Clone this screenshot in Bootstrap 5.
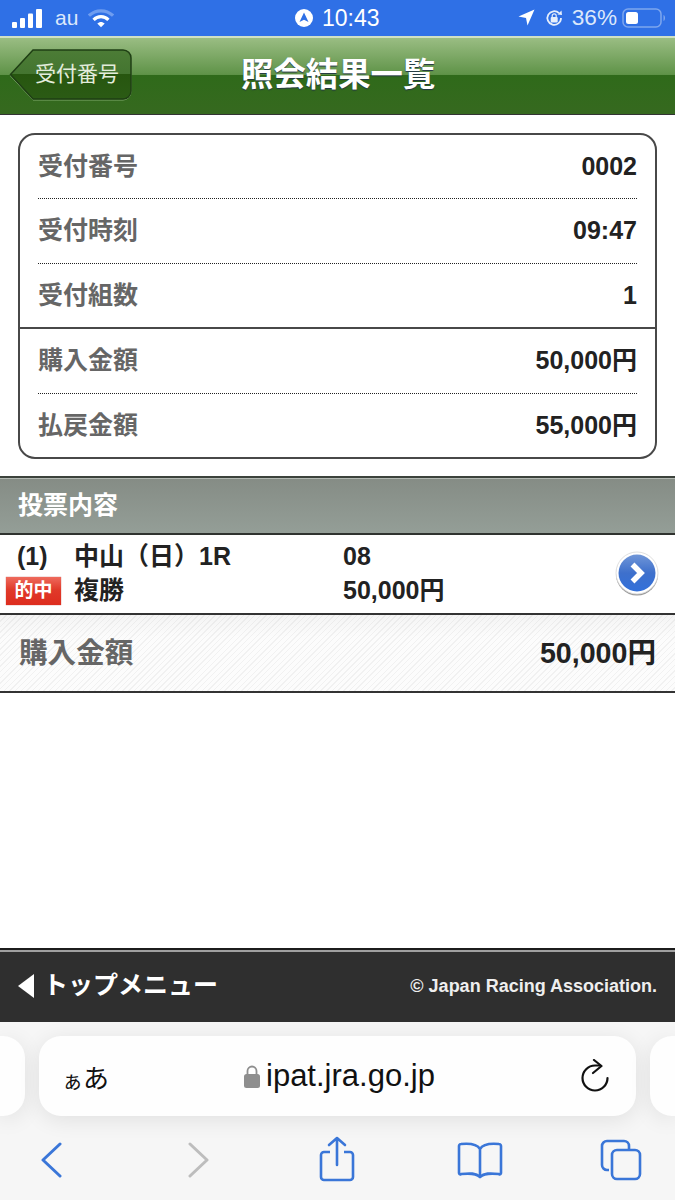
<!DOCTYPE html>
<html lang="ja">
<head>
  <meta charset="UTF-8">
  <meta name="viewport" content="width=device-width, initial-scale=1.0">
  <title>照会結果一覧</title>
  <link href="https://cdn.jsdelivr.net/npm/bootstrap@5.3.0/dist/css/bootstrap.min.css" rel="stylesheet">
  <style>
    html, body { height: 1200px; overflow: hidden; }
    body { font-family: "Liberation Sans", "Noto Sans CJK JP", sans-serif; color: #222; background: #fff; }
    .screen { height: 1200px; }

    .status-bar { height: 36px; background: #2f70e6; color: #fff; padding: 0 12px; }
    .status-left { width: 283px; }
    .status-bar .net { color: #dce8fb; margin-left: 12px; margin-right: 10px; font-size: 21px; }
    .status-clock { gap: 9px; font-size: 23px; }
    .status-right { gap: 8px; color: #dce8fb; font-size: 22.6px; }
    .rot-lock { margin-left: 2px; }
    .batt { margin: 0 -3px; }

    .app-header { height: 79px; border-top: 2px solid #cfe0c4; border-bottom: 1px solid #333;
      background: linear-gradient(#9abd83 0, #5f9348 48%, #2f6a1a 49%, #36691f 100%); }
    .app-header h1 { font-size: 32.4px; font-weight: 700; color: #fff; margin: 0 0 2px 109px; text-shadow: 0 1px 1px #234; }
    .back-btn { position: relative; margin-left: 9px; margin-top: -1px; width: 123px; height: 54px; }
    .back-btn span { position: absolute; left: 26px; top: 0; line-height: 49px; color: #e3ecdc; font-size: 21px; }

    .info-box { margin: 18px 18px 17px; border: 2px solid #484848; border-radius: 17px; }
    .info-row { height: 64.4px; font-size: 25px; font-weight: 700; padding: 0 18px; }
    .info-row.dotted { margin: 0 18px; padding: 0; border-bottom: 1.5px dotted #222; }
    .info-row.solid { height: 65.4px; border-bottom: 2px solid #484848; }
    .info-row.last-row { height: 63.4px; }
    .info-label { color: #666; }
    .info-value { color: #222; }

    .section-head { height: 59px; border-top: 2px solid #3c423c; border-bottom: 2px solid #2f322f; padding: 0 18px;
      background: linear-gradient(#858c85, #949e97); color: #fff; font-size: 25px; font-weight: 700; line-height: 55px; box-shadow: inset 0 1px 0 #b3b9b3; }

    .bet-row { height: 80px; border-bottom: 2px solid #333; font-size: 25px; font-weight: 700; line-height: 34px;
      display: grid; grid-template-columns: 74px 269px 1fr 60px; align-content: start; padding-top: 4px; }
    .bet-no { padding-left: 17px; }
    .hit-tag { margin: 4px 0 2px 6px; width: 55px; height: 28px; color: #fff; font-size: 19px; line-height: 28px; text-align: center;
      background: linear-gradient(#ee6a5c 0, #e03a2a 45%, #dd2c1e 100%); box-shadow: 0 0 1px #b55; }
    .go-cell { grid-column: 4; grid-row: 1 / span 2; padding-top: 12px; }

    .total-row { height: 78px; border-bottom: 2px solid #333; padding: 0 19px; font-weight: 700; font-size: 28.6px;
      background-image: linear-gradient(rgba(0,0,0,.03), rgba(0,0,0,0) 30%),
        repeating-linear-gradient(135deg, #f1f1f1 0, #f1f1f1 1px, #fcfcfc 1px, #fcfcfc 4px); }

    .page-body { flex: 1 1 auto; }

    .foot-bar { height: 74px; background: #2f2f2f; border-top: 2px solid #1c1c1c; box-shadow: inset 0 2px 0 #a0a0a0; padding: 0 18px; color: #fff; font-weight: 700; }
    .foot-link { font-size: 25px; gap: 9px; }
    .foot-copy { font-size: 18px; color: #eee; }

    .browser-bar { height: 178px; background: #f6f6f6; padding-top: 14px; }
    .url-row { gap: 14px; }
    .url-field { width: 597px; height: 80px; background: #fefefe; border-radius: 22px; box-shadow: 0 4px 22px rgba(0,0,0,.09); color: #111; }
    .url-side { width: 25px; height: 80px; background: #fefefe; box-shadow: 0 4px 22px rgba(0,0,0,.09); }
    .url-side.side-l { border-radius: 0 22px 22px 0; }
    .url-side.side-r { border-radius: 22px 0 0 22px; }
    .url-kana { flex: 0 0 182px; margin-left: 23px; padding-top: 6px; font-size: 26px; line-height: 1; }
    .url-kana i { font-style: normal; font-size: 21px; }
    .url-text { font-size: 31px; gap: 6px; }
    .reload { margin-left: auto; margin-right: 26px; margin-top: -1px; }

    .tool-row { height: 44px; margin-top: 22px; }
    .tb-back { margin-left: 40px; }
    .tb-next { margin-left: 122px; }
    .tb-share { margin-left: 109px; margin-top: -2px; }
    .tb-book { margin-left: 100px; }
    .tb-tabs { margin-left: 97px; }
  </style>
</head>
<body>
<div class="screen d-flex flex-column">

  <div class="status-bar d-flex align-items-center flex-shrink-0">
    <div class="status-left d-flex align-items-center">
      <svg width="31" height="19" viewBox="0 0 31 19"><g fill="#fff"><rect x="0" y="13" width="5" height="6" rx="1"/><rect x="8" y="9" width="5" height="10" rx="1"/><rect x="16" y="4.500" width="5" height="14.500" rx="1"/><rect x="24" y="0" width="6" height="19" rx="1"/></g></svg>
      <span class="net">au</span>
      <svg width="26" height="20" viewBox="0 0 28 20"><path d="M1 7.500C8.500 .5 19.500 .5 27 7.500" fill="none" stroke="#6f9df0" stroke-width="3.500"/><path d="M6 12C10.500 7.500 17.500 7.500 22 12" fill="none" stroke="#fff" stroke-width="3.500"/><path d="M10 16c2.500-2.300 5.500-2.300 8 0l-4 4z" fill="#fff"/></svg>
    </div>
    <div class="status-clock d-flex align-items-center">
      <svg width="18" height="18" viewBox="0 0 18 18"><circle cx="9" cy="9" r="9" fill="#fff"/><path d="M9 3.500 13.500 13 9 10.800 4.500 13z" fill="#2f70e6"/></svg>
      <span>10:43</span>
    </div>
    <div class="status-right d-flex align-items-center ms-auto">
      <svg width="17" height="17" viewBox="0 0 17 17"><path d="M16.500.5 9.500 16.500 8 9 .5 7.500z" fill="#fff"/></svg>
      <svg class="rot-lock" width="19" height="18" viewBox="0 0 19 18"><path d="M16 9a6.800 6.800 0 1 1-2-4.800" fill="none" stroke="#e6eefb" stroke-width="1.800"/><path d="M12.500 5.500 17 6 16.500 1.500z" fill="#e6eefb"/><rect x="5.700" y="8" width="7" height="5.500" rx="1" fill="#e6eefb"/><path d="M7.200 8V6.800a2 2 0 0 1 4 0V8" fill="none" stroke="#e6eefb" stroke-width="1.200"/></svg>
      <span>36%</span>
      <svg class="batt" width="44" height="22" viewBox="0 0 44 22"><rect x="1" y="2" width="38" height="18" rx="5" fill="none" stroke="#7ea6ee" stroke-width="1.500"/><rect x="4" y="5" width="12" height="12" rx="2.500" fill="#fff"/><path d="M41.500 8v6c1.200-.4 1.500-1.800 1.500-3s-.3-2.600-1.500-3z" fill="#7ea6ee"/></svg>
    </div>
  </div>

  <header class="app-header d-flex align-items-center flex-shrink-0">
    <a class="back-btn d-block text-decoration-none" href="#">
      <svg width="123" height="54" viewBox="0 0 123 54" class="d-block">
        <defs><linearGradient id="backFill" x1="0" y1="0" x2="0" y2="1"><stop offset="0" stop-color="#4c7c36"/><stop offset=".48" stop-color="#447530"/><stop offset=".5" stop-color="#27560f"/><stop offset="1" stop-color="#2b5b15"/></linearGradient></defs>
        <path d="M24 2.500H114a8 8 0 0 1 8 8V43a8 8 0 0 1-8 8H24L1.500 27z" fill="none" stroke="#7fa86b" stroke-width="1"/>
        <path d="M24 1H114a8 8 0 0 1 8 8V42a8 8 0 0 1-8 8H24L1.500 25.500z" fill="url(#backFill)" stroke="#1f3f14" stroke-width="1.500"/>
      </svg>
      <span>受付番号</span>
    </a>
    <h1>照会結果一覧</h1>
  </header>

  <main class="page-body d-flex flex-column">
    <div class="info-box">
      <div class="info-row dotted d-flex align-items-center justify-content-between"><span class="info-label">受付番号</span><span class="info-value">0002</span></div>
      <div class="info-row dotted d-flex align-items-center justify-content-between"><span class="info-label">受付時刻</span><span class="info-value">09:47</span></div>
      <div class="info-row solid d-flex align-items-center justify-content-between"><span class="info-label">受付組数</span><span class="info-value">1</span></div>
      <div class="info-row dotted d-flex align-items-center justify-content-between"><span class="info-label">購入金額</span><span class="info-value">50,000円</span></div>
      <div class="info-row last-row d-flex align-items-center justify-content-between"><span class="info-label">払戻金額</span><span class="info-value">55,000円</span></div>
    </div>

    <div class="section-head">投票内容</div>

    <div class="bet-row">
      <span class="bet-no">(1)</span>
      <span>中山（日）1R</span>
      <span>08</span>
      <div class="go-cell">
        <svg class="d-block" width="44" height="45" viewBox="0 0 44 45">
          <defs>
            <linearGradient id="goFill" x1="0" y1="0" x2="0" y2="1"><stop offset="0" stop-color="#7096d8"/><stop offset=".5" stop-color="#3e70cc"/><stop offset="1" stop-color="#3270da"/></linearGradient>
          </defs>
          <circle cx="22" cy="23.500" r="21" fill="#9a9a9a"/>
          <circle cx="22" cy="22" r="21" fill="#fff" stroke="#d8d8d8" stroke-width=".8"/>
          <circle cx="22" cy="22" r="18.500" fill="url(#goFill)"/>
          <path d="M17.500 13.500 26 22 17.500 30.500" fill="none" stroke="#fff" stroke-width="5.500"/>
        </svg>
      </div>
      <span class="hit-tag">的中</span>
      <span>複勝</span>
      <span>50,000円</span>
    </div>

    <div class="total-row d-flex align-items-center justify-content-between">
      <span class="info-label">購入金額</span><span>50,000円</span>
    </div>
  </main>

  <footer class="foot-bar d-flex align-items-center justify-content-between flex-shrink-0">
    <div class="foot-link d-flex align-items-center">
      <svg width="16" height="24" viewBox="0 0 16 24"><path d="M16 0V24L0 12z" fill="#fff"/></svg>
      <span>トップメニュー</span>
    </div>
    <div class="foot-copy">© Japan Racing Association.</div>
  </footer>

  <div class="browser-bar flex-shrink-0">
    <div class="url-row d-flex">
      <div class="url-side side-l"></div>
      <div class="url-field d-flex align-items-center">
        <span class="url-kana"><i>ぁ</i>あ</span>
        <span class="url-text d-flex align-items-center">
          <svg width="16" height="25" viewBox="0 0 16 25"><path d="M3.500 11V7a4.500 4.500 0 0 1 9 0v4" fill="none" stroke="#8e8e8e" stroke-width="1.800"/><rect x="0" y="10" width="16" height="14" rx="2.500" fill="#8e8e8e"/></svg>
          ipat.jra.go.jp
        </span>
        <svg class="reload" width="30" height="34" viewBox="0 0 30 34"><path d="M15 6.500H20M15 6.500A12.500 12.500 0 1 0 27.500 19" fill="none" stroke="#111" stroke-width="2.200" stroke-linecap="round"/><path d="M14 1 21.500 7 13 14" fill="none" stroke="#111" stroke-width="2.200" stroke-linecap="round" stroke-linejoin="round"/></svg>
      </div>
      <div class="url-side side-r"></div>
    </div>
    <div class="tool-row d-flex align-items-center">
      <svg class="tb-back" width="24" height="36" viewBox="0 0 24 36"><path d="M20 2 3 18 20 34" fill="none" stroke="#3a76d8" stroke-width="3" stroke-linecap="round" stroke-linejoin="round"/></svg>
      <svg class="tb-next" width="24" height="36" viewBox="0 0 24 36"><path d="M4 2 21 18 4 34" fill="none" stroke="#bdbdbd" stroke-width="3" stroke-linecap="round" stroke-linejoin="round"/></svg>
      <svg class="tb-share" width="38" height="46" viewBox="0 0 38 46"><path d="M11 16H5a3 3 0 0 0-3 3V41a3 3 0 0 0 3 3H31a3 3 0 0 0 3-3V19a3 3 0 0 0-3-3H25" fill="none" stroke="#3a76d8" stroke-width="2.600"/><path d="M18 29V2M10 9 18 2 26 9" fill="none" stroke="#3a76d8" stroke-width="2.600" stroke-linecap="round" stroke-linejoin="round"/></svg>
      <svg class="tb-book" width="46" height="38" viewBox="0 0 46 38"><path d="M23 8C20 3 14 2 4 3 3 3 2 4 2 5V32C2 33 3 34 4 33 13 32 19 32 23 36 27 32 33 32 42 33 43 34 44 33 44 32V5C44 4 43 3 42 3 32 2 26 3 23 8ZM23 8V36" fill="none" stroke="#3a76d8" stroke-width="2.600" stroke-linejoin="round"/></svg>
      <svg class="tb-tabs" width="42" height="42" viewBox="0 0 42 42"><path d="M9 31H7a5 5 0 0 1-5-5V7a5 5 0 0 1 5-5H24a5 5 0 0 1 5 5V10" fill="none" stroke="#3a76d8" stroke-width="2.600"/><rect x="12" y="11" width="28" height="29" rx="5" fill="none" stroke="#3a76d8" stroke-width="2.600"/></svg>
    </div>
  </div>
</div>
<script src="https://cdn.jsdelivr.net/npm/bootstrap@5.3.0/dist/js/bootstrap.bundle.min.js"></script>
</body>
</html>
